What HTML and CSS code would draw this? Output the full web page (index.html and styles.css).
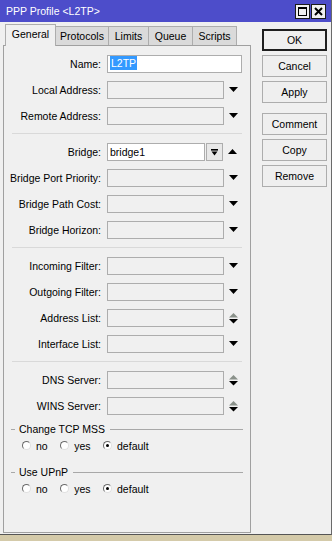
FILE: index.html
```html
<!DOCTYPE html>
<html>
<head>
<meta charset="utf-8">
<link rel="stylesheet" href="styles.css">
</head>
<body>
<div class="window">
  <div class="titlebar">
    <span class="title">PPP Profile &lt;L2TP&gt;</span>
    <div class="tb-btns">
      <span class="tb-btn"><svg width="9" height="9" viewBox="0 0 9 9"><rect x="0.5" y="0.5" width="8" height="8" fill="none" stroke="#000"/><rect x="0" y="0" width="9" height="2" fill="#000"/></svg></span>
      <span class="tb-btn"><svg width="9" height="9" viewBox="0 0 9 9"><path d="M1 1 L8 8 M8 1 L1 8" stroke="#000" stroke-width="2"/></svg></span>
    </div>
  </div>
  <div class="main">
    <div class="left">
      <div class="tabs">
        <div class="tab sel t-general">General</div>
        <div class="tab t-protocols">Protocols</div>
        <div class="tab t-limits">Limits</div>
        <div class="tab t-queue">Queue</div>
        <div class="tab t-scripts">Scripts</div>
      </div>
      <div class="panel">
        <div class="row">
          <div class="lbl">Name:</div>
          <div class="field wide white"><span class="hl">L2TP</span></div>
        </div>
        <div class="row">
          <div class="lbl">Local Address:</div>
          <div class="field"></div>
          <div class="arrow"><svg class="down" width="9" height="5" viewBox="0 0 9 5"><polygon points="0,0 9,0 4.5,5" fill="#000"/></svg></div>
        </div>
        <div class="row">
          <div class="lbl">Remote Address:</div>
          <div class="field"></div>
          <div class="arrow"><svg class="down" width="9" height="5" viewBox="0 0 9 5"><polygon points="0,0 9,0 4.5,5" fill="#000"/></svg></div>
        </div>
        <div class="sep"></div>
        <div class="row">
          <div class="lbl">Bridge:</div>
          <div class="field white short">bridge1</div>
          <div class="minibtn"><svg width="7" height="7" viewBox="0 0 7 7"><rect x="0" y="0" width="7" height="1.6" fill="#000"/><polygon points="0.5,2.6 6.5,2.6 3.5,6.5" fill="#000"/></svg></div>
          <div class="arrow"><svg class="down" width="9" height="5" viewBox="0 0 9 5"><polygon points="0,5 9,5 4.5,0" fill="#000"/></svg></div>
        </div>
        <div class="row">
          <div class="lbl">Bridge Port Priority:</div>
          <div class="field"></div>
          <div class="arrow"><svg class="down" width="9" height="5" viewBox="0 0 9 5"><polygon points="0,0 9,0 4.5,5" fill="#000"/></svg></div>
        </div>
        <div class="row">
          <div class="lbl">Bridge Path Cost:</div>
          <div class="field"></div>
          <div class="arrow"><svg class="down" width="9" height="5" viewBox="0 0 9 5"><polygon points="0,0 9,0 4.5,5" fill="#000"/></svg></div>
        </div>
        <div class="row">
          <div class="lbl">Bridge Horizon:</div>
          <div class="field"></div>
          <div class="arrow"><svg class="down" width="9" height="5" viewBox="0 0 9 5"><polygon points="0,0 9,0 4.5,5" fill="#000"/></svg></div>
        </div>
        <div class="sep"></div>
        <div class="row">
          <div class="lbl">Incoming Filter:</div>
          <div class="field"></div>
          <div class="arrow"><svg class="down" width="9" height="5" viewBox="0 0 9 5"><polygon points="0,0 9,0 4.5,5" fill="#000"/></svg></div>
        </div>
        <div class="row">
          <div class="lbl">Outgoing Filter:</div>
          <div class="field"></div>
          <div class="arrow"><svg class="down" width="9" height="5" viewBox="0 0 9 5"><polygon points="0,0 9,0 4.5,5" fill="#000"/></svg></div>
        </div>
        <div class="row">
          <div class="lbl">Address List:</div>
          <div class="field"></div>
          <div class="arrow"><svg width="9" height="11" viewBox="0 0 9 11"><polygon points="0,4.5 9,4.5 4.5,0" fill="#8a918a"/><polygon points="0,6 9,6 4.5,10.5" fill="#000"/></svg></div>
        </div>
        <div class="row">
          <div class="lbl">Interface List:</div>
          <div class="field"></div>
          <div class="arrow"><svg class="down" width="9" height="5" viewBox="0 0 9 5"><polygon points="0,0 9,0 4.5,5" fill="#000"/></svg></div>
        </div>
        <div class="sep"></div>
        <div class="row">
          <div class="lbl">DNS Server:</div>
          <div class="field"></div>
          <div class="arrow"><svg width="9" height="11" viewBox="0 0 9 11"><polygon points="0,4.5 9,4.5 4.5,0" fill="#8a918a"/><polygon points="0,6 9,6 4.5,10.5" fill="#000"/></svg></div>
        </div>
        <div class="row">
          <div class="lbl">WINS Server:</div>
          <div class="field"></div>
          <div class="arrow"><svg width="9" height="11" viewBox="0 0 9 11"><polygon points="0,4.5 9,4.5 4.5,0" fill="#8a918a"/><polygon points="0,6 9,6 4.5,10.5" fill="#000"/></svg></div>
        </div>
        <div class="group">Change TCP MSS</div>
        <div class="radios">
          <div class="radio"><span class="circle"></span>no</div>
          <div class="radio"><span class="circle"></span>yes</div>
          <div class="radio"><span class="circle on"></span>default</div>
        </div>
        <div class="group second">Use UPnP</div>
        <div class="radios">
          <div class="radio"><span class="circle"></span>no</div>
          <div class="radio"><span class="circle"></span>yes</div>
          <div class="radio"><span class="circle on"></span>default</div>
        </div>
      </div>
    </div>
    <div class="buttons">
      <div class="btn default">OK</div>
      <div class="btn">Cancel</div>
      <div class="btn spaced">Apply</div>
      <div class="btn">Comment</div>
      <div class="btn">Copy</div>
      <div class="btn">Remove</div>
    </div>
  </div>
</div>
</body>
</html>
```
FILE: styles.css
```css
* { box-sizing: border-box; }
body {
  margin: 0;
  background: #d4caa9;
  font-family: "Liberation Sans", Arial, sans-serif;
  font-size: 10.5px;
  color: #000;
}
.window {
  width: 332px;
  height: 535px;
  background: #f0f0f0;
  border-right: 1px solid #6a6a6a;
  border-bottom: 1px solid #555;
  display: flex;
  flex-direction: column;
}
.titlebar {
  height: 22px;
  flex: none;
  background: #4d4dca;
  color: #fff;
  display: flex;
  align-items: center;
  padding-left: 6px;
}
.title { font-size: 10.5px; }
.tb-btns {
  margin-left: auto;
  margin-right: 5px;
  display: flex;
  gap: 1px;
}
.tb-btn {
  width: 15px;
  height: 15px;
  background: #f0f0f0;
  border: 1px solid #1a1a1a;
  display: flex;
  align-items: center;
  justify-content: center;
}
.main { display: flex; flex: 1; }
.left {
  margin-left: 3px;
  width: 248px;
  display: flex;
  flex-direction: column;
}
.tabs {
  height: 23px;
  display: flex;
  align-items: flex-end;
  padding-left: 2px;
  position: relative;
  z-index: 1;
}
.tab {
  height: 19px;
  border: 1px solid #adadad;
  border-bottom: none;
  background: #dadada;
  margin-left: -1px;
  display: flex;
  align-items: center;
  justify-content: center;
}
.tab.sel {
  height: 22px;
  margin-left: 0;
  margin-bottom: -1px;
  background: #f0f0f0;
  padding-bottom: 3px;
  position: relative;
  z-index: 2;
}
.t-general { width: 51px; }
.t-protocols { width: 54px; }
.t-limits { width: 41px; }
.t-queue { width: 45px; }
.t-scripts { width: 45px; }
.panel {
  height: 488px;
  border: 1px solid #a0a0a0;
  padding-top: 9px;
}
.row {
  display: flex;
  align-items: center;
  height: 18px;
  margin-bottom: 8px;
}
.lbl {
  width: 97px;
  margin-right: 6px;
  text-align: right;
  white-space: nowrap;
}
.field {
  width: 117px;
  height: 18px;
  border: 1px solid #adadad;
  background: #f0f0f0;
  padding-left: 2px;
  line-height: 16px;
  white-space: nowrap;
}
.field.wide { width: 135px; }
.field.white { background: #fff; }
.field.short { width: 98px; margin-right: 1px; }
.hl {
  display: inline-block;
  background: #3399ff;
  color: #fff;
  line-height: 14px;
  padding: 0 1px;
  vertical-align: 1px;
}
.minibtn {
  width: 17px;
  height: 18px;
  border: 1px solid #adadad;
  background: #e8e8e8;
  display: flex;
  align-items: center;
  justify-content: center;
}
.arrow {
  width: 19px;
  display: flex;
  justify-content: center;
  align-items: center;
}
.arrow svg { display: block; }
.arrow .down { margin-bottom: 1px; }
.sep {
  height: 1px;
  background: #d9d9d9;
  margin: 0 8px 9px 8px;
}
.group {
  height: 12px;
  display: flex;
  align-items: center;
  padding-left: 7px;
  padding-right: 7px;
  margin-top: 0;
  white-space: nowrap;
}
.group::before {
  content: "";
  width: 4px;
  height: 1px;
  background: #a8a8a8;
  margin-right: 4px;
}
.group::after {
  content: "";
  flex: 1;
  height: 1px;
  background: #a8a8a8;
  margin-left: 5px;
}
.group.second { margin-top: 14px; }
.radios {
  display: flex;
  align-items: center;
  height: 13px;
  margin-top: 4px;
  padding-left: 18px;
  gap: 12.5px;
}
.radio {
  display: flex;
  align-items: center;
}
.circle {
  width: 9px;
  height: 9px;
  border-radius: 50%;
  border: 1px solid;
  border-color: #6a6a6a #e0e0e0 #e0e0e0 #6a6a6a;
  background: #fff;
  margin-right: 5px;
  display: flex;
  align-items: center;
  justify-content: center;
}
.circle.on::after {
  content: "";
  width: 3px;
  height: 3px;
  border-radius: 50%;
  background: #000;
}
.buttons {
  margin-left: 11px;
  width: 65px;
  padding-top: 7px;
  display: flex;
  flex-direction: column;
}
.btn {
  height: 22px;
  border: 1px solid #adadad;
  background: #efefef;
  margin-bottom: 4px;
  display: flex;
  align-items: center;
  justify-content: center;
}
.btn.default { border: 2px solid #1e1e1e; }
.btn.spaced { margin-bottom: 10px; }
```
